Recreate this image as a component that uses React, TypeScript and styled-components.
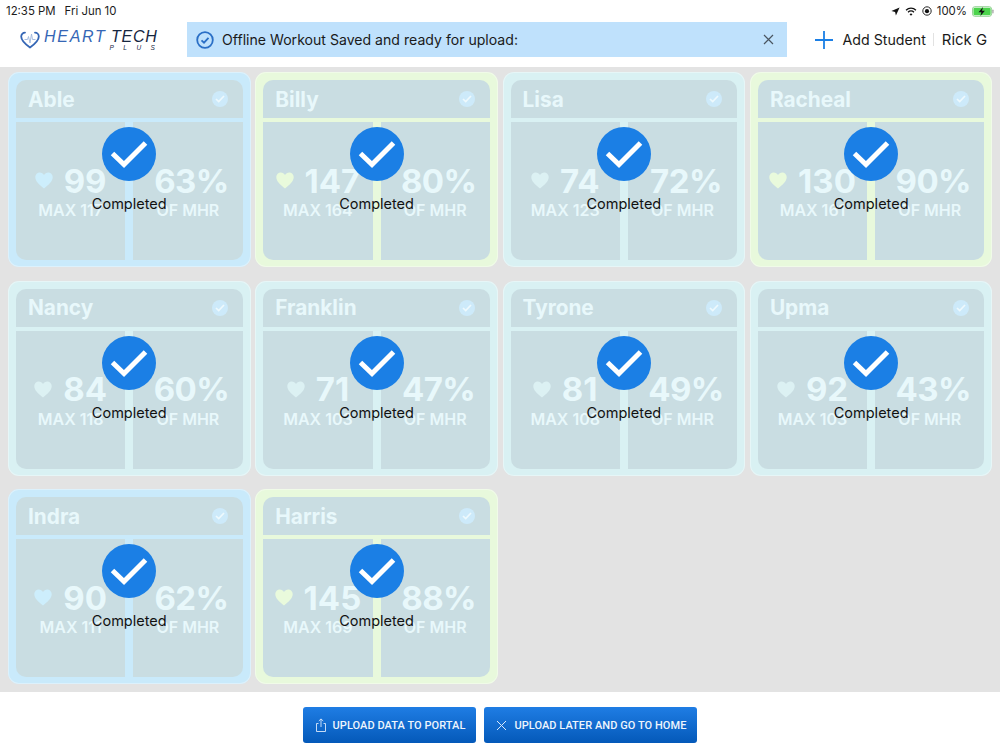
import React from "react";
import styled, { createGlobalStyle } from "styled-components";

const Global = createGlobalStyle`
  html, body { margin: 0; padding: 0; background: #fff; }
  * { box-sizing: border-box; }
`;

const Page = styled.div`
  width: 1000px;
  height: 750px;
  display: flex;
  flex-direction: column;
  overflow: hidden;
  font-family: Inter, "Liberation Sans", sans-serif;
  color: #1a1a1a;
`;

const StatusBar = styled.div`
  height: 20px;
  padding: 2px 6px 0 6px;
  display: flex;
  align-items: center;
  justify-content: space-between;
  font-size: 11.4px;
  color: #1c1c1c;
`;

const StatusLeft = styled.div`
  display: flex;
  gap: 9px;
`;

const StatusRight = styled.div`
  display: flex;
  align-items: center;
  gap: 5px;
`;

const Header = styled.header`
  height: 47px;
  display: flex;
  align-items: flex-start;
  padding: 2px 13px 0 20px;
`;

const Logo = styled.div`
  width: 167px;
  height: 35px;
  display: flex;
  align-items: center;
  gap: 4px;
`;

const LogoWords = styled.div`
  display: flex;
  flex-direction: column;
  align-items: flex-end;
  line-height: 1;
  margin-top: 1px;
`;

const LogoMain = styled.div`
  font-family: "Liberation Sans", sans-serif;
  font-style: italic;
  font-size: 16px;
  letter-spacing: 1.7px;
  line-height: 14px;
  white-space: nowrap;
  color: #3566b5;
`;

const LogoDark = styled.span`
  color: #16263f;
  margin-left: -1.5px;
  letter-spacing: 0.7px;
`;

const LogoPlus = styled.div`
  font-family: "Liberation Sans", sans-serif;
  font-style: italic;
  font-size: 6.5px;
  letter-spacing: 9.5px;
  line-height: 7px;
  margin-right: -7px;
  color: #16263f;
`;

const Banner = styled.div`
  width: 600px;
  height: 35px;
  background: #bfe1fc;
  display: flex;
  align-items: center;
  padding: 0 13px 0 9px;
  font-size: 14.1px;
  gap: 8px;
`;

const BannerText = styled.span`
  flex: 1;
`;

const Actions = styled.div`
  flex: 1;
  height: 35px;
  display: flex;
  align-items: center;
  justify-content: flex-end;
  font-size: 14.2px;
`;

const AddLabel = styled.span`
  margin-left: 10px;
`;

const Separator = styled.span`
  width: 1px;
  height: 13px;
  background: #e2e2e2;
  margin: 0 8px 0 7px;
`;

const UserName = styled.span`
  font-size: 14.9px;
`;

const Board = styled.main`
  flex: 1;
  background: #e3e3e3;
  padding: 5px 8px 0;
  display: grid;
  grid-template-columns: repeat(4, 242.5px);
  grid-auto-rows: 195px;
  column-gap: 4.8px;
  row-gap: 13.5px;
  align-content: start;
`;

const Card = styled.section<{ $tone: string }>`
  position: relative;
  border-radius: 11px;
  background: ${(p) => p.$tone};
  padding: 8px;
  display: grid;
  grid-template-rows: 38px 138px;
  row-gap: 4px;
  box-shadow: inset 0 0 0 1px rgba(255, 255, 255, 0.35);
`;

const CardHead = styled.div`
  background: #c9dde2;
  border-radius: 10px 10px 0 0;
  display: flex;
  align-items: center;
  justify-content: space-between;
  padding: 0 15px 0 12px;
  font-size: 20.8px;
  font-weight: 700;
  color: #e8f8fb;
`;

const SmallCheck = styled.span`
  width: 16px;
  height: 16px;
  border-radius: 50%;
  background: #cdeafa;
  display: flex;
  align-items: center;
  justify-content: center;
`;

const CardBody = styled.div`
  display: grid;
  grid-template-columns: 1fr 1fr;
  column-gap: 8px;
`;

const Cell = styled.div<{ $side: "left" | "right" }>`
  background: #c9dde2;
  border-radius: ${(p) => (p.$side === "left" ? "0 0 0 10px" : "0 0 10px 0")};
  padding-top: 38px;
  display: flex;
  flex-direction: column;
  align-items: center;
  color: #e8f8fb;
`;

const Value = styled.div`
  display: flex;
  align-items: center;
  justify-content: center;
  height: 41px;
  gap: 11px;
  font-size: 33px;
  font-weight: 700;
  white-space: nowrap;
`;

const Percent = styled(Value)`
  margin-left: 7px;
  letter-spacing: -0.6px;
`;

const Caption = styled.div`
  font-size: 16px;
  font-weight: 600;
  line-height: 19px;
  white-space: nowrap;
`;

const Overlay = styled.div`
  position: absolute;
  left: 0;
  right: 0;
  top: 55px;
  display: flex;
  flex-direction: column;
  align-items: center;
  color: #111;
  font-size: 14.5px;
  line-height: 18px;
`;

const DoneDisc = styled.div`
  width: 54px;
  height: 54px;
  border-radius: 50%;
  background: #1b7fe5;
  display: flex;
  align-items: center;
  justify-content: center;
  margin-bottom: 14px;
`;

const Footer = styled.footer`
  height: 58px;
  background: #fff;
  display: flex;
  align-items: flex-start;
  justify-content: center;
  gap: 8px;
  padding-top: 15px;
`;

const ActionButton = styled.button`
  height: 36px;
  border: none;
  border-radius: 3px;
  background: linear-gradient(#1f7de4, #0459b9);
  color: #eef5fd;
  font-family: Roboto, "Liberation Sans", sans-serif;
  font-size: 11px;
  font-weight: 500;
  letter-spacing: 0.06px;
  display: flex;
  align-items: center;
  gap: 6px;
  padding: 0 11px 0 12px;
  white-space: nowrap;
`;

const LogoHeart = () => (
  <svg width="20" height="18" viewBox="0 0 20 18" fill="none">
    <path d="M5 1.6C2.8 1.6 1.2 3.4 1.2 5.5c0 4 4.6 8 8.8 11 4.2-3 8.800-7 8.800-11 0-2.100-1.600-3.900-3.800-3.900" stroke="#3566b5" strokeWidth="1.800" strokeLinecap="round" />
    <path d="M4.500 8.500h3l1-3 1.500 6.500 1.500-9 1 5.500h3" stroke="#9db6dc" strokeWidth="0.900" />
  </svg>
);

const Heart = ({ tone }: { tone: string }) => (
  <svg width="18" height="17" viewBox="0 0 18 17">
    <path d="M9 16.500C4 12.500.3 9.500.3 5.100.3 2.300 2.400.4 4.800.4 6.500.4 8.100 1.300 9 2.900 9.900 1.300 11.500.4 13.200.4c2.400 0 4.500 1.900 4.500 4.700 0 4.400-3.700 7.400-8.700 11.400z" fill={tone} />
  </svg>
);

type Student = { name: string; hr: number; max: number; pct: number; tone: string; heart: string };

const blue = "#c9eafb";
const green = "#e8f9dc";
const teal = "#d9f1f3";

const students: Student[] = [
  { name: "Able", hr: 99, max: 117, pct: 63, tone: blue, heart: "#cdeefc" },
  { name: "Billy", hr: 147, max: 164, pct: 80, tone: green, heart: "#e9fadc" },
  { name: "Lisa", hr: 74, max: 123, pct: 72, tone: teal, heart: "#dcf1f3" },
  { name: "Racheal", hr: 130, max: 161, pct: 90, tone: green, heart: "#e9fadc" },
  { name: "Nancy", hr: 84, max: 118, pct: 60, tone: teal, heart: "#dcf1f3" },
  { name: "Franklin", hr: 71, max: 103, pct: 47, tone: teal, heart: "#dcf1f3" },
  { name: "Tyrone", hr: 81, max: 108, pct: 49, tone: teal, heart: "#dcf1f3" },
  { name: "Upma", hr: 92, max: 103, pct: 43, tone: teal, heart: "#dcf1f3" },
  { name: "Indra", hr: 90, max: 111, pct: 62, tone: blue, heart: "#cdeefc" },
  { name: "Harris", hr: 145, max: 169, pct: 88, tone: green, heart: "#e9fadc" },
];

export default function App() {
  return (
    <Page>
      <Global />
      <StatusBar>
        <StatusLeft>
          <span>12:35 PM</span>
          <span>Fri Jun 10</span>
        </StatusLeft>
        <StatusRight>
          <svg width="9" height="9" viewBox="0 0 11 11"><path d="M10.500.5 6 10.500 5 6 .5 5z" fill="#111" /></svg>
          <svg width="12" height="9" viewBox="0 0 13 10" fill="none">
            <path d="M1 3.500a8 8 0 0 1 11 0" stroke="#111" strokeWidth="1.500" />
            <path d="M3.200 5.800a4.800 4.800 0 0 1 6.600 0" stroke="#111" strokeWidth="1.500" />
            <path d="M6.500 9.800 4.900 8a2.300 2.300 0 0 1 3.200 0z" fill="#111" />
          </svg>
          <svg width="10" height="10" viewBox="0 0 11 11" fill="none">
            <circle cx="5.500" cy="5.500" r="4.600" stroke="#111" strokeWidth="1" />
            <circle cx="5.500" cy="5.700" r="2.300" fill="#111" />
          </svg>
          <span>100%</span>
          <svg width="22" height="11" viewBox="0 0 23 11" fill="none">
            <rect x="0.500" y="0.500" width="20" height="10" rx="2.500" stroke="#8fcf8f" />
            <rect x="1.500" y="1.500" width="18" height="8" rx="1.500" fill="#4cd44c" />
            <rect x="21.300" y="3.500" width="1.200" height="4" rx="0.600" fill="#9a9a9a" />
            <path d="M11.500 .8 6.800 6.200h3l-1 4 4.700-5.400h-3z" fill="#111" />
          </svg>
        </StatusRight>
      </StatusBar>
      <Header>
        <Logo>
          <LogoHeart />
          <LogoWords>
            <LogoMain>HEART <LogoDark>TECH</LogoDark></LogoMain>
            <LogoPlus>PLUS</LogoPlus>
          </LogoWords>
        </Logo>
        <Banner>
          <svg width="18" height="18" viewBox="0 0 18 18" fill="none">
            <circle cx="9" cy="9" r="7.800" stroke="#2a6fc6" strokeWidth="1.800" />
            <path d="M5.500 9.300 8 11.700l4.500-4.800" stroke="#2a6fc6" strokeWidth="1.800" />
          </svg>
          <BannerText>Offline Workout Saved and ready for upload:</BannerText>
          <svg width="11" height="11" viewBox="0 0 11 11" fill="none">
            <path d="M1 1l9 9M10 1l-9 9" stroke="#4a5560" strokeWidth="1.200" />
          </svg>
        </Banner>
        <Actions>
          <svg width="18" height="18" viewBox="0 0 18 18" fill="none">
            <path d="M9 0v18M0 9h18" stroke="#1b7fe5" strokeWidth="1.800" />
          </svg>
          <AddLabel>Add Student</AddLabel>
          <Separator />
          <UserName>Rick G</UserName>
        </Actions>
      </Header>
      <Board>
        {students.map((s) => (
          <Card key={s.name} $tone={s.tone}>
            <CardHead>
              <span>{s.name}</span>
              <SmallCheck>
                <svg width="10" height="8" viewBox="0 0 10 8" fill="none">
                  <path d="M1 4l2.700 2.600L9 1" stroke="#eef9fd" strokeWidth="1.700" />
                </svg>
              </SmallCheck>
            </CardHead>
            <CardBody>
              <Cell $side="left">
                <Value>
                  <Heart tone={s.heart} />
                  <span>{s.hr}</span>
                </Value>
                <Caption>MAX {s.max}</Caption>
              </Cell>
              <Cell $side="right">
                <Percent>{s.pct}%</Percent>
                <Caption>OF MHR</Caption>
              </Cell>
            </CardBody>
            <Overlay>
              <DoneDisc>
                <svg width="38" height="28" viewBox="0 0 38 28" fill="none">
                  <path d="M2.500 13.500 14 24.500 35.500 3" stroke="#fff" strokeWidth="5" />
                </svg>
              </DoneDisc>
              Completed
            </Overlay>
          </Card>
        ))}
      </Board>
      <Footer>
        <ActionButton>
          <svg width="12" height="14" viewBox="0 0 12 14" fill="none">
            <path d="M3.500 5.500H1.500v8h9v-8H8.500M6 9V1M3.800 3 6 .9 8.200 3" stroke="#dbe9fa" strokeWidth="0.900" />
          </svg>
          UPLOAD DATA TO PORTAL
        </ActionButton>
        <ActionButton>
          <svg width="12" height="11" viewBox="0 0 12 11" fill="none">
            <path d="M1 1l9 9M10 1l-9 9" stroke="#dbe9fa" strokeWidth="1" />
          </svg>
          UPLOAD LATER AND GO TO HOME
        </ActionButton>
      </Footer>
    </Page>
  );
}
